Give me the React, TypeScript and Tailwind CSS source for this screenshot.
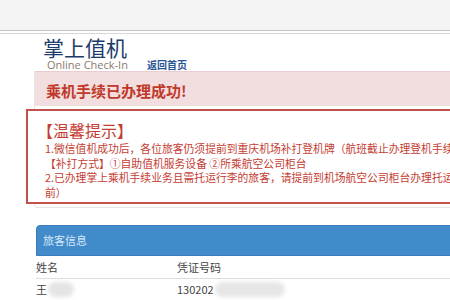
import React from "react";

const FONT = {
  fontFamily: '"Noto Sans CJK SC", "Noto Sans", sans-serif',
};

const TIPS = [
  "1.微信值机成功后，各位旅客仍须提前到重庆机场补打登机牌（航班截止办理登机手续前",
  "【补打方式】①自助值机服务设备 ②所乘航空公司柜台",
  "2.已办理掌上乘机手续业务且需托运行李的旅客，请提前到机场航空公司柜台办理托运手",
  "前）",
];

export default function App() {
  return (
    <div
      className="relative h-[300px] w-[450px] overflow-hidden bg-white"
      style={FONT}
    >
      {/* browser-ish top strip */}
      <div className="h-[30px] bg-[#f4f4f4]" />
      <div className="h-px bg-[#c6c6c6]" />
      <div className="h-[2px] bg-white" />
      <div className="h-px bg-[#d6d6d6]" />

      <main className="w-[540px] pl-[34px]">
        {/* Brand */}
        <div className="pl-[9px] pt-px">
          <h1 className="text-[21px] leading-[24px] text-[#1d3b6b]">
            掌上值机
          </h1>
          <div className="flex h-[12px] items-end">
            <span
              className="w-[104px] pl-[4px] text-[11px] leading-[12px] text-[#8a7a6c]"
              style={{ fontFamily: '"Open Sans", sans-serif' }}
            >
              Online Check-In
            </span>
            <a className="text-[10px] font-bold leading-[12px] text-[#2a5594]">
              返回首页
            </a>
          </div>
        </div>

        {/* Result + tips */}
        <div className="rounded-b-[4px] border-x border-b border-[#e6e6e6] pb-[3px]">
          <div className="h-[35px] border-t border-[#ebccd1] bg-[#f2dede] pl-[11px] pt-[10px]">
            <p className="text-[15px] font-bold leading-[18px] text-[#c0392b]">
              乘机手续已办理成功!
            </p>
          </div>

          <div className="-ml-[9px] mt-[3px] border-2 border-[#c4504c] bg-white pb-[2px] pl-[17px] pt-[10px] text-[#c43d33]">
            <p className="-ml-[8px] text-[16px] leading-[18px]">【温馨提示】</p>
            <div className="mt-[2px]">
              {TIPS.map((t) => (
                <p
                  key={t}
                  className="whitespace-nowrap text-[10.8px] leading-[14.7px]"
                >
                  {t}
                </p>
              ))}
            </div>
          </div>
        </div>

        {/* Passenger panel */}
        <div className="ml-[2px] mt-[17px]">
          <div className="flex h-[31px] items-center rounded-t-[4px] border border-[#3b7dbb] bg-[#428bca] pl-[6px]">
            <span className="text-[11px] text-[#d5e8f8]">旅客信息</span>
          </div>
          <div className="flex h-[23px] items-center border-b border-[#dddddd] text-[11px] text-[#444]">
            <span className="w-[141px]">姓名</span>
            <span>凭证号码</span>
          </div>
          <div className="flex h-[20px] items-center text-[11px] text-[#444]">
            <span className="relative w-[141px]">
              王
              <span className="absolute left-[12px] top-[1px] h-[15px] w-[26px] rounded-full bg-[#e4e4e4] blur-[2px]" />
            </span>
            <span className="relative">
              130202
              <span className="absolute left-[38px] top-[1px] h-[15px] w-[70px] rounded-full bg-[#e6e6e6] blur-[2px]" />
            </span>
          </div>
        </div>
      </main>
    </div>
  );
}
